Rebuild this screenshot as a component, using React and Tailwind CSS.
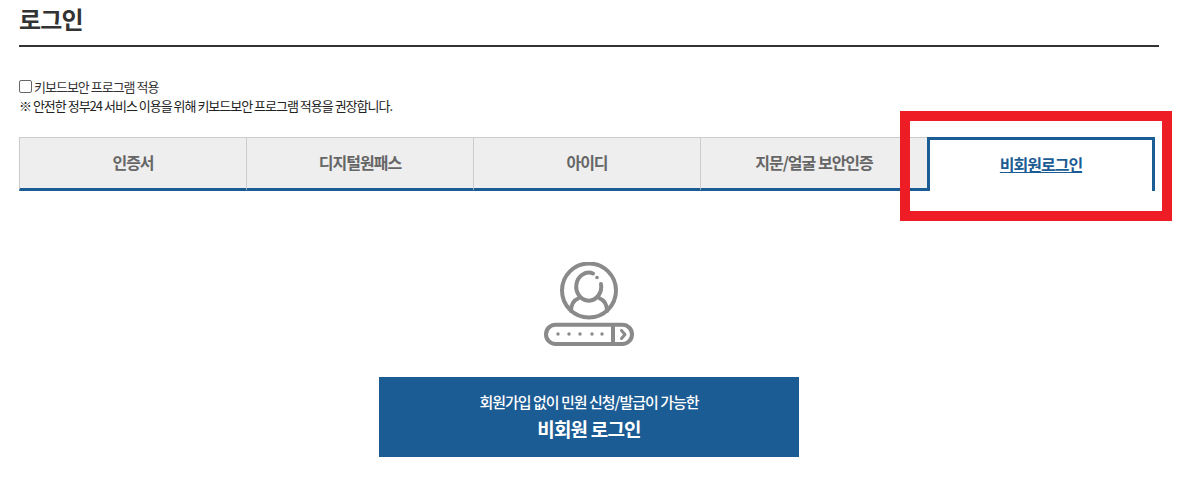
function Tab({ label }) {
  return (
    <div className="w-[227px] h-[54px] flex items-center justify-center bg-[#eeeeee] border-t border-l border-[#cccccc] border-b-[3px] border-b-[#1c5c94] text-[16px] font-bold text-[#666666] tracking-[-1px]">
      <span className="-mt-[3px]">{label}</span>
    </div>
  );
}

function LoginIcon() {
  return (
    <svg width="92" height="85" viewBox="0 0 92 85" fill="none" stroke="#8a8a8a" strokeWidth="4" strokeLinecap="round" strokeLinejoin="round">
      <circle cx="46" cy="28.5" r="27" />
      <path d="M50 11.5 A12.5 14 0 1 0 58 22" />
      <circle cx="54" cy="15.5" r="1.8" fill="#8a8a8a" stroke="none" />
      <path d="M36 36 C31 38 28 43 28 49" />
      <path d="M56 36 C61 38 64 43 64 49" />
      <rect x="3" y="62.7" width="86" height="19.3" rx="9.6" />
      <path d="M70 63 V82" />
      <path d="M78.5 68.5 L82 72.5 L78.5 76.5" strokeWidth="3" />
      {[15, 26, 37, 49, 59].map((x) => (
        <circle key={x} cx={x} cy="72" r="1.7" fill="#8a8a8a" stroke="none" />
      ))}
    </svg>
  );
}

export default function App() {
  return (
    <div className="relative w-[1179px] h-[494px] overflow-hidden bg-white font-['Noto_Sans_CJK_KR','Noto_Sans',sans-serif] text-[#222222]">
      <div className="pl-[19px] w-[1159px]">
        <h1 className="h-[47px] border-b-2 border-[#333333] text-[24px] leading-[38px] font-bold text-[#333333] tracking-[-0.8px]">로그인</h1>

        <div className="mt-[30px] flex items-center h-[19px] text-[13px] tracking-[-1px] text-[#333333]">
          <span className="w-[13px] h-[13px] mr-[2px] rounded-[2px] border border-[#666666] bg-white" />
          <span>키보드보안 프로그램 적용</span>
        </div>
        <p className="h-[20px] text-[13px] leading-[19px] tracking-[-1px] text-[#222222]">※ 안전한 정부24 서비스 이용을 위해 키보드보안 프로그램 적용을 권장합니다.</p>

        <div className="mt-[21px] w-[1136px] flex">
          <Tab label="인증서" />
          <Tab label="디지털원패스" />
          <Tab label="아이디" />
          <Tab label="지문/얼굴 보안인증" />
          <div className="w-[228px] h-[54px] flex items-center justify-center bg-white border-t-[3px] border-x-[3px] border-[#1c5c94] text-[16px] font-bold text-[#1c5c94] underline tracking-[-1px]">
            <span className="-mt-[3px]">비회원로그인</span>
          </div>
        </div>

        <div className="mt-[71px] flex flex-col items-center">
          <LoginIcon />
          <div className="mt-[30px] w-[420px] h-[80px] pt-[2px] bg-[#1c5c94] text-white flex flex-col items-center justify-center">
            <span className="text-[15px] leading-[24px] font-medium tracking-[-1px] -mt-[2px]">회원가입 없이 민원 신청/발급이 가능한</span>
            <span className="text-[19px] leading-[30px] font-bold tracking-[-0.8px]">비회원 로그인</span>
          </div>
        </div>
      </div>

      <div className="absolute left-[900px] top-[111px] w-[272px] h-[110px] border-[10px] border-[#ee1c25]" />
    </div>
  );
}
